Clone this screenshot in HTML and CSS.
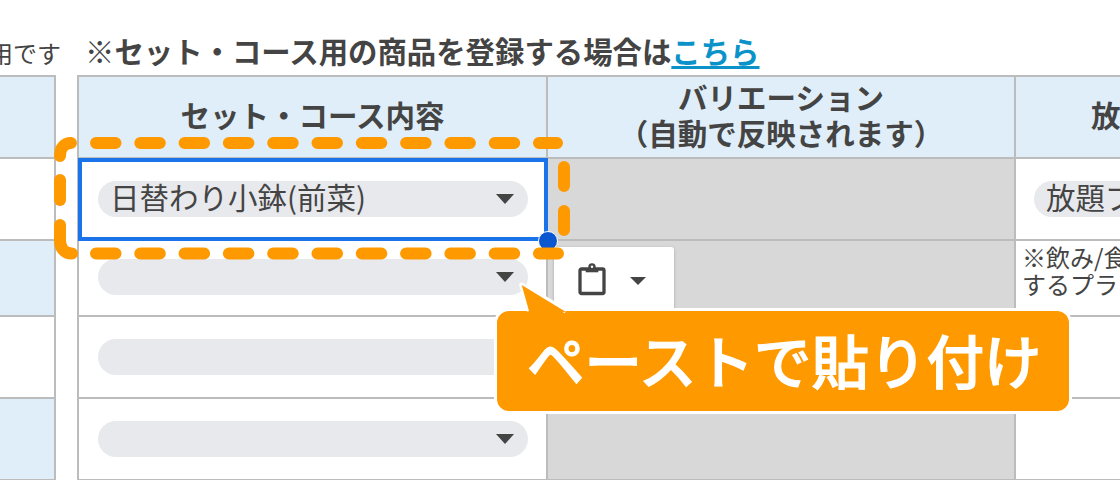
FILE: index.html
```html
<!DOCTYPE html>
<html lang="ja">
<head>
<meta charset="utf-8">
<title>セット・コース内容</title>
<link rel="stylesheet" href="styles.css">
</head>
<body>
<div class="page">
  <div class="notes">
    <p class="note-left">用です</p>
    <p class="note-main">※セット・コース用の商品を登録する場合は<a href="#" class="link">こちら</a></p>
  </div>
  <div class="tables">
    <table class="grid side">
      <tr class="r-head"><th></th></tr>
      <tr class="r1"><td></td></tr>
      <tr class="r2 tint"><td></td></tr>
      <tr class="r3"><td></td></tr>
      <tr class="r4 tint"><td></td></tr>
    </table>
    <table class="grid main">
      <tr class="r-head">
        <th class="c1">セット・コース内容</th>
        <th class="c2">バリエーション<br>（自動で反映されます）</th>
        <th class="th-left">放題プラン</th>
      </tr>
      <tr class="r1">
        <td><div class="select"><span>日替わり小鉢(前菜)</span><i class="caret"></i></div></td>
        <td class="off"></td>
        <td class="c3"><div class="select wide"><span>放題プラン</span></div></td>
      </tr>
      <tr class="r2">
        <td class="lift"><div class="select"><span></span><i class="caret"></i></div></td>
        <td class="off"></td>
        <td class="small">※飲み/食べ放題に<br>するプラン</td>
      </tr>
      <tr class="r3">
        <td><div class="select"><span></span><i class="caret"></i></div></td>
        <td class="off"></td>
        <td></td>
      </tr>
      <tr class="r4">
        <td><div class="select"><span></span><i class="caret"></i></div></td>
        <td class="off"></td>
        <td></td>
      </tr>
    </table>
  </div>

  <div class="selection"></div>
  <div class="handle"></div>

  <div class="popup">
    <svg class="clip" width="30" height="34" viewBox="0 0 30 34" fill="none">
      <rect x="3" y="7" width="24" height="24.500" rx="1.500" stroke="#444" stroke-width="3.300"/>
      <path d="M8.700 6H21.300V10.300H8.700Z" fill="#444"/>
      <circle cx="15" cy="5" r="3.700" fill="#444"/>
      <circle cx="15" cy="4.800" r="1.200" fill="#fff"/>
    </svg>
    <i class="caret small-caret"></i>
  </div>

  <svg class="dash" width="530" height="140" viewBox="0 0 530 140" fill="none" stroke="#ff9900" stroke-width="12" stroke-linecap="round">
    <path d="M46 13H507" stroke-dasharray="19.500 24.800"/>
    <path d="M46 123.500H508" stroke-dasharray="19.500 24.800"/>
    <path d="M10 26C10 18 14 13 21 13"/>
    <path d="M10 50V70"/>
    <path d="M10 95V110C10 118 14 123.500 22 123.500"/>
    <path d="M514 37V56M514 81V100"/>
  </svg>

  <div class="callout">
    <svg class="tail" width="60" height="34" viewBox="0 0 60 34">
      <path d="M12.300 30L4.700 4L49 30" fill="none" stroke="#fff" stroke-width="5" stroke-linejoin="round"/>
      <path d="M4.700 4L12.300 31H49Z" fill="#ff9900"/>
    </svg>
    <span class="callout-text">ペーストで貼り付け</span>
  </div>
</div>
</body>
</html>
```
FILE: styles.css
```css
* { box-sizing: border-box; }
html, body { margin: 0; padding: 0; background: #fff; }
.page {
  position: relative;
  width: 1120px;
  height: 480px;
  overflow: hidden;
  font-family: "Noto Sans CJK JP", "Noto Sans", sans-serif;
  color: #444;
}
.notes {
  display: flex;
  align-items: baseline;
  height: 75px;
  padding-top: 31px;
  margin-left: -11px;
}
.notes p { margin: 0; white-space: nowrap; line-height: 38px; }
.note-left { width: 96px; font-size: 24px; }
.note-main { font-size: 29.400px; font-weight: 700; }
.link { color: #0b93c9; text-decoration: underline; text-decoration-thickness: 3px; text-underline-offset: 3px; }
.tables { display: flex; gap: 21px; margin-left: -45px; }
.grid { border-collapse: collapse; table-layout: fixed; flex: none; }
.grid th, .grid td { border: 2px solid #bcbcbc; padding: 0; }
.grid th {
  background: #dfeef8;
  font-size: 29.500px;
  font-weight: 700;
  line-height: 36px;
  text-align: center;
  padding-bottom: 7px;
}
.side { width: 101px; }
.main { width: 1340px; }
.tint td { background: #dfeef8; }
.r-head { height: 82px; }
.r1 { height: 82px; }
.r2 { height: 76px; }
.r3 { height: 82px; }
.r4 { height: 82px; }
.c1 { width: 469px; }
.c2 { width: 468px; }
.grid .th-left { text-align: left; padding-left: 75px; white-space: nowrap; }
.off { background: #d8d8d8; }
.grid td.lift { padding-bottom: 3px; }
.select {
  display: flex;
  align-items: center;
  justify-content: space-between;
  height: 36px;
  margin: 0 18px 0 19px;
  padding: 0 14px 5px 12px;
  border-radius: 18px;
  background: #e8e9ed;
  font-size: 29.500px;
  line-height: 31px;
  white-space: nowrap;
}
.select .caret { margin-top: 5px; }
.grid td.c3 { padding-left: 18px; }
.select.wide { margin: 0; }
.grid td.small {
  font-size: 24px;
  line-height: 27px;
  padding-left: 6px;
  padding-top: 2px;
  vertical-align: top;
  white-space: nowrap;
}
.caret {
  flex: none;
  width: 0;
  height: 0;
  border-left: 9.500px solid transparent;
  border-right: 9.500px solid transparent;
  border-top: 10px solid #444;
}
.dash { position: absolute; left: 50px; top: 130px; }
.selection {
  position: absolute;
  left: 78px;
  top: 158px;
  width: 470px;
  height: 83px;
  border: 4px solid #1a73e8;
}
.handle {
  position: absolute;
  left: 538px;
  top: 231px;
  width: 20px;
  height: 20px;
  border: 1.500px solid #fff;
  border-radius: 50%;
  background: #0b57d0;
}
.popup {
  position: absolute;
  left: 554px;
  top: 247px;
  width: 120px;
  height: 72px;
  display: flex;
  align-items: flex-start;
  gap: 23px;
  padding: 15px 0 0 23px;
  background: #fff;
  box-shadow: 0 1px 3px rgba(0, 0, 0, .25);
  border-radius: 3px;
}
.small-caret {
  margin-top: 15px;
  border-left-width: 8px;
  border-right-width: 8px;
  border-top-width: 8.500px;
}
.callout {
  position: absolute;
  left: 494px;
  top: 308px;
  width: 578px;
  height: 106px;
  display: flex;
  align-items: center;
  padding: 0 0 3px 30px;
  background: #ff9900;
  border: 3px solid #fff;
  border-radius: 15px;
}
.tail { position: absolute; left: 20px; top: -30px; overflow: visible; }
.callout-text {
  color: #fff;
  font-size: 57.500px;
  font-weight: 500;
  -webkit-text-stroke: 1.200px #fff;
  line-height: 1;
  white-space: nowrap;
}
```
